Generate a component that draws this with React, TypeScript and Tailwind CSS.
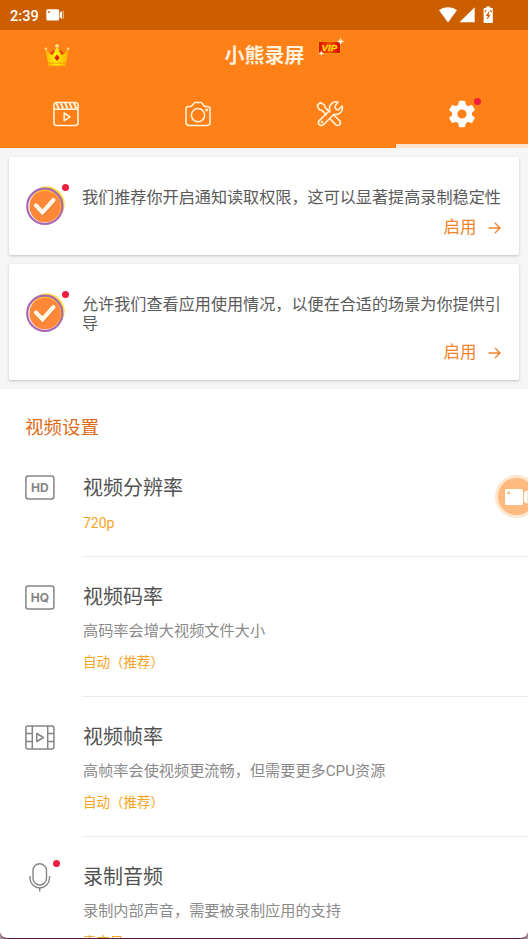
import type { ReactNode } from "react";

function Dot({ className }: { className: string }) {
  return <span className={`absolute h-[7px] w-[7px] rounded-full bg-[#ee1f40] ${className}`} />;
}

function StatusBar() {
  return (
    <div className="flex h-[30px] items-center bg-[#cc5e00] pl-[10px] pr-[34px] text-white">
      <span className="pt-px font-['Roboto',sans-serif] text-[14.6px] font-medium leading-[30px]">2:39</span>
      <svg className="ml-[7px]" width="19" height="12" viewBox="0 0 19 12">
        <rect x="0.3" y="0.3" width="13" height="11.2" rx="1.6" fill="#fff" />
        <circle cx="3" cy="3" r="1" fill="#cc5e00" />
        <path d="M14 3.8 16 2v8l-2-1.8Z" fill="#fff" />
        <path d="M16.7 2h1.2v8h-1.2Z" fill="#fff" opacity=".5" />
      </svg>
      <svg className="ml-auto" width="55" height="18" viewBox="0 0 55 18">
        <path d="M0 4.2C2.6 2.3 5.6 1.3 9 1.3s6.500 1 9 2.900L9 16.500Z" fill="#fff" />
        <path d="M35.700 1.300v15H20.500Z" fill="#fff" />
        <path d="M47.200 0.500h4V2h1.800q.8 0 .8.8v13.400q0 .8-.8.8h-7.600q-.8 0-.8-.8V2.800q0-.8.8-.8h1.800Z" fill="#fff" />
        <path d="M50.200 5 46.700 9.900h2l-.7 4 3.600-5.200h-2.100l1-3.700Z" fill="#cc5e00" />
        <path d="M46.200 6.500V4.600h1.400M52.300 6.500V4.600h-1.400" stroke="#cc5e00" strokeWidth=".9" fill="none" />
      </svg>
    </div>
  );
}

function Crown() {
  return (
    <svg width="26" height="24" viewBox="0 0 26 24">
      <defs>
        <linearGradient id="crownGold" x1="0" x2="1">
          <stop offset="0" stopColor="#ffb500" />
          <stop offset=".45" stopColor="#ffec12" />
          <stop offset="1" stopColor="#ffad00" />
        </linearGradient>
      </defs>
      <path d="m5.500 9 4 4L13 6l3.600 7 4-4-1 7H6.500Z" fill="#dc360c" />
      <path d="M1.300 6 6.500 11l3-1.500L13 4l3.500 5.500 3 1.500 5.200-5-2.600 13.500H3.900Z" fill="url(#crownGold)" />
      <path d="M6.700 10.500 9.600 7l1.200 1.200-2.900 4ZM19.300 10.500 16.400 7l-1.200 1.200 2.900 4Z" fill="#dc360c" />
      <path d="M4.300 19.300h17.400V23H4.300Z" fill="url(#crownGold)" />
      <path d="M4.300 20.200h17.400M4.300 23h17.400" stroke="#e69b00" strokeWidth=".7" />
      <path d="m13 11.500 2.700 3.200L13 18l-2.700-3.300Z" fill="#e0230c" />
      <circle cx="13" cy="2.800" r="1.900" fill="#ffd98c" />
      <circle cx="1.900" cy="5.800" r="1.300" fill="#ffe08a" />
      <circle cx="24.100" cy="5.800" r="1.300" fill="#ffe08a" />
    </svg>
  );
}

function VipBadge() {
  return (
    <svg width="30" height="22" viewBox="0 0 30 22">
      <defs>
        <linearGradient id="vipRed" x1="0" x2="1">
          <stop offset="0" stopColor="#e60505" />
          <stop offset=".5" stopColor="#f24a00" />
          <stop offset="1" stopColor="#d90000" />
        </linearGradient>
      </defs>
      <rect x="2.500" y="4.500" width="22" height="12" fill="url(#vipRed)" stroke="#ee9800" strokeWidth="1" />
      <text x="13.300" y="14" textAnchor="middle" fill="#ffd90a" stroke="#ffd90a" strokeWidth=".3" fontFamily="Liberation Sans, sans-serif" fontSize="9.600" fontWeight="700" fontStyle="italic">
        VIP
      </text>
      <circle cx="24.500" cy="4.500" r="2.200" fill="#ffe3b0" opacity=".5" />
      <path d="m24.500.5.9 3.100 3.200.9-3.200.9-.9 3.100-.9-3.100-3.200-.9 3.200-.9Z" fill="#fff0d4" />
      <circle cx="5.300" cy="16.300" r="1.800" fill="#ffe3b0" opacity=".5" />
      <path d="m5.300 13.200.7 2.400 2.400.7-2.400.7-.7 2.400-.7-2.400-2.400-.7 2.400-.7Z" fill="#fff0d4" />
    </svg>
  );
}

function RecordingsIcon() {
  return (
    <svg width="26" height="26" viewBox="0 0 26 26" fill="none" stroke="#fff3dc" strokeWidth="1.600" strokeLinejoin="round">
      <rect x="1" y="1.500" width="24" height="23" rx="2.800" />
      <path d="M1 8.200h24" />
      <path d="M3.200 2l2.600 5.500M7.600 2l2.600 5.500M12 2l2.600 5.500M16.400 2 19 7.500M20.800 2l2.600 5.500" strokeWidth="1.800" />
      <path d="m11.200 12 5.800 3.800-5.800 3.800Z" />
    </svg>
  );
}

function CameraIcon() {
  return (
    <svg width="26" height="26" viewBox="0 0 26 26" fill="none" stroke="#fff3dc" strokeWidth="1.500" strokeLinejoin="round">
      <path d="M3.500 5.500h2q1 0 1.700-1l1.200-1.700q.8-1.300 2-1.300h5.200q1.200 0 2 1.300l1.200 1.700q.7 1 1.700 1h2Q25 5.500 25 8v13.500q0 3-3 3H4q-3 0-3-3V8q0-2.500 2.500-2.500Z" />
      <circle cx="13" cy="14.200" r="6.600" />
      <path d="M21.700 7.200v3.200M20.100 8.800h3.200" strokeWidth="1.300" />
    </svg>
  );
}

function ToolsIcon() {
  return (
    <svg width="28" height="28" viewBox="0 0 28 28" fill="none" stroke="#fff3dc" strokeWidth="1.600" strokeLinejoin="round" strokeLinecap="round">
      <path d="m10.200 14.800-4-4.200-2.700-.8L1.200 5.600l3-3.100 4.200 2.400.8 2.700 4.600 4.400" />
      <path d="m18.200 15.400 5.400 5.300q1.800 2 0 3.900-1.900 1.800-3.900 0l-5.500-5.500" />
      <path d="M22 2q-4-1-6.700 1.800-2.600 2.700-1.500 6.400L3.300 20.600q-1.900 2.100 0 4.100 2 1.800 4.100 0l10.500-10.500q3.800 1.100 6.600-1.500 2.600-2.700 1.700-6.700l-3.500 3.500q-1.300.8-2.900-.7-1.400-1.600-.6-2.900Z" />
      <circle cx="6" cy="22.100" r=".5" />
    </svg>
  );
}

function GearIcon() {
  return (
    <svg width="28" height="28" viewBox="0 0 28 28">
      <path
        d="M11.600 1.500h4.800l1 3.900 2.500 1.400 3.800-1.100 2.400 4.200-2.800 2.700v2.800l2.800 2.700-2.400 4.200-3.800-1.100-2.500 1.400-1 3.900h-4.800l-1-3.900-2.500-1.400-3.800 1.100-2.400-4.200 2.800-2.700v-2.800L1.900 9.900l2.400-4.200 3.800 1.100 2.500-1.400ZM14 9.400a4.600 4.600 0 1 0 0 9.200 4.600 4.600 0 0 0 0-9.200Z"
        fill="#fff" fillRule="evenodd"
      />
      <path
        d="M11.600 1.500h4.800l1 3.900 2.500 1.400 3.800-1.100 2.400 4.200-2.800 2.700v2.800l2.800 2.700-2.400 4.200-3.800-1.100-2.500 1.400-1 3.900h-4.800l-1-3.900-2.500-1.400-3.800 1.100-2.400-4.200 2.800-2.700v-2.800L1.900 9.900l2.400-4.200 3.800 1.100 2.500-1.400Z"
        fill="none" stroke="#fff" strokeWidth="1.300" strokeLinejoin="round"
      />
    </svg>
  );
}

function Header() {
  return (
    <header className="h-[118px] bg-[#ff8017]">
      <div className="grid h-[50px] grid-cols-[44px_180.5px_91.5px_1fr]">
        <div />
        <div className="pt-[13px]"><Crown /></div>
        <h1 className="pt-[11px] text-[20px] font-bold leading-[30px] text-[#fff1dd]">小熊录屏</h1>
        <div className="pt-[7px]"><VipBadge /></div>
      </div>
      <nav className="grid h-[68px] grid-cols-4">
        <div className="flex items-center justify-center"><RecordingsIcon /></div>
        <div className="flex items-center justify-center"><CameraIcon /></div>
        <div className="flex items-center justify-center"><ToolsIcon /></div>
        <div className="flex items-center justify-center border-b-4 border-[#ffe3cc] pt-[4px]">
          <div className="relative"><GearIcon /><Dot className="-top-[2px] left-[26px]" /></div>
        </div>
      </nav>
    </header>
  );
}

function CheckBadge() {
  return (
    <div className="relative h-[40px] w-[40px] shrink-0">
      <svg width="40" height="40" viewBox="0 0 40 40">
        <circle cx="21.800" cy="18.200" r="17.900" fill="#ffe04a" />
        <circle cx="19.800" cy="20.300" r="17.800" fill="#fff" />
        <circle cx="21.300" cy="19" r="16.300" fill="#ffbd2e" />
        <circle cx="20" cy="20.600" r="15.600" fill="#ff8738" />
        <circle cx="19.800" cy="20.300" r="17.600" fill="none" stroke="#aa68ae" strokeWidth="2.200" />
        <path d="m11.500 20.800 6.300 6.700 10.900-12.500" fill="none" stroke="#e0742f" strokeWidth="4" strokeLinecap="round" />
        <path d="m11 19.500 6.500 6.900L28.500 14" fill="none" stroke="#fff8e7" strokeWidth="4.200" strokeLinecap="round" />
      </svg>
      <Dot className="-top-[2px] left-[37px]" />
    </div>
  );
}

function PermissionCard({ children, className }: { children: ReactNode; className: string }) {
  return (
    <section className={`flex rounded-[2px] bg-white pl-[16px] shadow-[0_1px_3px_rgba(0,0,0,0.22)] ${className}`}>
      <div className="pt-[29px]"><CheckBadge /></div>
      <div className="ml-[17px] flex w-[420px] flex-col pb-[15px] pt-[31px]">
        <p className="text-[16.130px] leading-[19px] text-[#5a5a5a]">{children}</p>
        <button className="mt-auto flex items-center self-end text-[16.500px] leading-[24px] text-[#f0832a]">
          启用
          <svg className="ml-[11px] mr-[1.500px]" width="13" height="12" viewBox="0 0 13 12" fill="none" stroke="#f0832a" strokeWidth="1.400">
            <path d="M.5 6h11M7 1l5 5-5 5" />
          </svg>
        </button>
      </div>
    </section>
  );
}

function LabelIcon({ label }: { label: string }) {
  return (
    <svg width="30" height="25" viewBox="0 0 30 25">
      <rect x=".9" y=".9" width="28" height="23" rx="2.500" fill="none" stroke="#858585" strokeWidth="1.500" />
      <text x="14.900" y="16.800" textAnchor="middle" fill="#858585" fontFamily="Inter, sans-serif" fontSize="12" fontWeight="700">
        {label}
      </text>
    </svg>
  );
}

function FilmIcon() {
  return (
    <svg width="30" height="25" viewBox="0 0 30 25" fill="none" stroke="#858585" strokeWidth="1.500" strokeLinejoin="round">
      <rect x=".9" y=".9" width="28" height="23" rx="2" />
      <path d="M7.300 1v23M22.700 1v23M1 8.500h6.300M1 16.500h6.300M22.700 8.500H29M22.700 16.500H29M11.800 8.500v8l6.700-4Z" />
    </svg>
  );
}

function MicIcon() {
  return (
    <span className="relative -mt-[2px] block h-[30px] w-[30px]">
      <svg width="30" height="30" viewBox="0 0 30 30" fill="none" stroke="#858585" strokeWidth="1.400">
        <rect x="8" y=".8" width="13.500" height="21.200" rx="6.700" />
        <path d="M5 13v2.200a9.700 9.700 0 0 0 19.500 0V13M14.700 25v3.500" />
      </svg>
      <Dot className="-top-[3px] left-[28px]" />
    </span>
  );
}

type SettingProps = { icon: ReactNode; title: string; description?: string; value: string; className: string };

function Setting({ icon, title, description, value, className }: SettingProps) {
  return (
    <div className={`flex pl-[25px] ${className}`}>
      <div className="w-[58px] shrink-0 pt-[28px]">{icon}</div>
      <div className={`flex-1 border-b border-[#e9e9e9] ${description ? "pt-[25px]" : "pt-[26px]"}`}>
        <h3 className="text-[20px] leading-[30px] text-[#525252]">{title}</h3>
        {description && <p className="mt-[8px] text-[15.180px] leading-[22px] text-[#8a8a8a]">{description}</p>}
        <p className={`mt-[10px] leading-[20px] text-[#f4a322] ${description ? "text-[13.500px]" : "text-[14px]"}`}>{value}</p>
      </div>
    </div>
  );
}

function FloatingRecorder() {
  return (
    <button className="absolute left-[495px] top-[475px] h-[43px] w-[43px] rounded-full border-[3px] border-[#ffe6d0] bg-[#fdb97e]">
      <svg width="37" height="37" viewBox="0 0 37 37">
        <rect x="7" y="11" width="18" height="16" rx="1.500" fill="#fff" />
        <circle cx="10.700" cy="14.700" r="1.500" fill="#fdb97e" />
        <path d="m26 14.500 3-2v13l-3-2Z" fill="#fff" />
        <path d="M29 12.500h4v13h-4Z" fill="#fff" opacity=".7" />
      </svg>
    </button>
  );
}

export default function App() {
  return (
    <div className="h-[939px] w-[528px] overflow-hidden bg-[#a8949d]">
      <div className="relative h-[939px] overflow-hidden rounded-b-[7px] border-b border-[#5b1b3a] bg-white font-['Roboto','Noto_Sans_CJK_SC',sans-serif]">
        <StatusBar />
        <Header />
        <div className="flex h-[241px] flex-col gap-[9px] bg-[#f6f6f6] px-[9px] pt-[9px]">
          <PermissionCard className="h-[98px]">我们推荐你开启通知读取权限，这可以显著提高录制稳定性</PermissionCard>
          <PermissionCard className="h-[116px]">允许我们查看应用使用情况，以便在合适的场景为你提供引导</PermissionCard>
        </div>
        <main>
          <h2 className="h-[58px] pl-[25px] pt-[25px] text-[18.500px] leading-[28px] text-[#e06a16]">视频设置</h2>
          <Setting className="h-[110px]" icon={<LabelIcon label="HD" />} title="视频分辨率" value="720p" />
          <Setting className="h-[140px]" icon={<LabelIcon label="HQ" />} title="视频码率" description="高码率会增大视频文件大小" value="自动（推荐）" />
          <Setting className="h-[140px]" icon={<FilmIcon />} title="视频帧率" description="高帧率会使视频更流畅，但需要更多CPU资源" value="自动（推荐）" />
          <Setting className="h-[140px]" icon={<MicIcon />} title="录制音频" description="录制内部声音，需要被录制应用的支持" value="麦克风" />
        </main>
        <FloatingRecorder />
      </div>
    </div>
  );
}
